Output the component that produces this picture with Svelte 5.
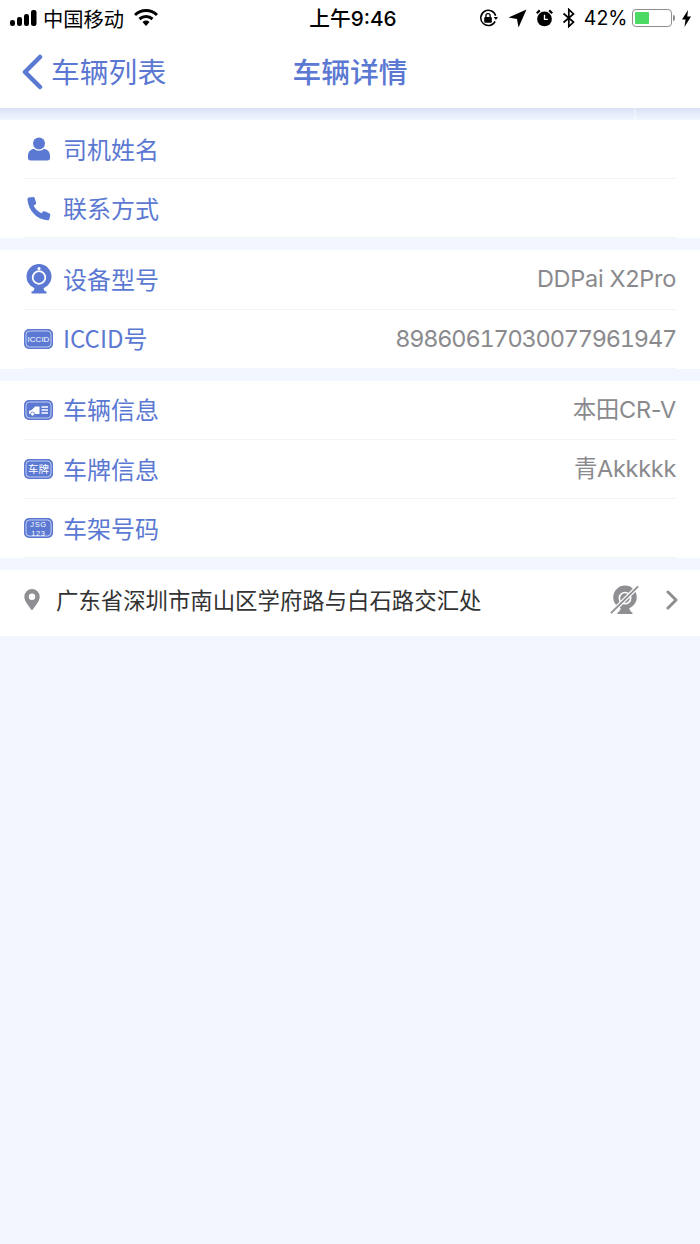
<script>
	const groups = [
		[
			{ icon: 'user', label: '司机姓名', value: '' },
			{ icon: 'phone', label: '联系方式', value: '' }
		],
		[
			{ icon: 'cam', label: '设备型号', value: 'DDPai X2Pro' },
			{ icon: 'iccid', label: 'ICCID号', value: '89860617030077961947', num: true }
		],
		[
			{ icon: 'car', label: '车辆信息', value: '本田CR-V' },
			{ icon: 'plate', label: '车牌信息', value: '青Akkkkk' },
			{ icon: 'jsg', label: '车架号码', value: '' }
		]
	];
</script>

<div class="page">
	<header class="top">
		<div class="status">
			<div class="status-left">
				<svg class="signal" width="28" height="16" viewBox="0 0 28 16">
					<rect x="0" y="10" width="5" height="6" rx="2.2" />
					<rect x="7" y="7" width="5" height="9" rx="2.2" />
					<rect x="14" y="4" width="5" height="12" rx="2.2" />
					<rect x="21" y="0" width="5.5" height="16" rx="2.2" />
				</svg>
				<span class="carrier">中国移动</span>
				<svg class="wifi" width="24" height="18" viewBox="0 0 24 18">
					<path d="M1 6 A16 16 0 0 1 23 6" fill="none" stroke="#000" stroke-width="3" />
					<path d="M5.5 10 A10 10 0 0 1 18.500 10" fill="none" stroke="#000" stroke-width="3" />
					<path d="M8.500 13 A5 5 0 0 1 15.500 13 L12 17 Z" fill="#000" />
				</svg>
			</div>
			<div class="clock">上午9:46</div>
			<div class="status-right">
				<svg width="19" height="19" viewBox="0 0 20 20">
					<path d="M17 13 A8 8 0 1 1 17.500 7" fill="none" stroke="#000" stroke-width="1.600" />
					<path d="M15.500 8.500 L20 8.500 L17.800 11.500 Z" fill="#000" />
					<rect x="5.500" y="8.500" width="8" height="6" rx="1" fill="#000" />
					<path d="M7.300 8.500 V7 A2.200 2.200 0 0 1 11.700 7 V8.500" fill="none" stroke="#000" stroke-width="1.400" />
				</svg>
				<svg class="gap-a" width="19" height="19" viewBox="0 0 18 18">
					<path d="M17.500 0.500 L10 17.500 L8.500 9.500 L0.500 8 Z" fill="#000" />
				</svg>
				<svg class="gap-b" width="17" height="18" viewBox="0 0 18 19">
					<circle cx="9" cy="10.500" r="7.800" fill="#000" />
					<path d="M9 6 V11 H12.500" fill="none" stroke="#fff" stroke-width="1.400" />
					<path d="M0.800 4.500 L4 1.500 M17.200 4.500 L14 1.500" stroke="#000" stroke-width="2.400" />
				</svg>
				<svg class="gap-c" width="14" height="20" viewBox="0 0 14 20">
					<path d="M1.500 5.500 L11.500 14 L6.800 18.500 V1.500 L11.500 6 L1.500 14.500" fill="none" stroke="#000" stroke-width="1.700" />
				</svg>
				<span class="percent">42%</span>
				<div class="battery"><div class="charge"></div></div>
				<div class="nub"></div>
				<svg class="bolt" width="11" height="17" viewBox="0 0 10 17">
					<path d="M6.500 0 L0.500 9.500 H4 L3 17 L9.500 6.500 H5.800 Z" fill="#000" />
				</svg>
			</div>
		</div>
		<nav class="nav">
			<div class="back">
				<svg width="22" height="36" viewBox="0 0 22 36">
					<path d="M19 3 L4 18 L19 33" fill="none" stroke="#5b78d2" stroke-width="4.500" stroke-linecap="round" stroke-linejoin="round" />
				</svg>
				<span class="nav-text">车辆列表</span>
			</div>
			<div class="title nav-text">车辆详情</div>
		</nav>
	</header>
	<div class="shade"></div>

	{#each groups as rows}
		<section class="group">
			{#each rows as row}
				<div class="row">
					<div class="icon">
						{#if row.icon === 'user'}
							<svg width="24" height="26" viewBox="0 0 26 26">
								<circle cx="13" cy="7" r="6.500" />
								<path d="M1 21 C1 15 5 13 8 13 C10 15.500 16 15.500 18 13 C21 13 25 15 25 21 V22.500 C25 24.500 24 25.500 22 25.500 H4 C2 25.500 1 24.500 1 22.500 Z" />
							</svg>
						{:else if row.icon === 'phone'}
							<svg width="25" height="25" viewBox="0 0 26 26">
								<path d="M3 1.500 L7.500 1 C8.300 1 8.800 1.300 9 2 L10.500 7 C10.700 7.800 10.400 8.400 9.800 8.800 L8 10 C9.500 13.500 12.500 16.500 16 18 L17.800 16.200 C18.300 15.700 19 15.600 19.600 15.900 L24.400 18.300 C25.200 18.700 25.500 19.300 25.200 20 L24.300 23.800 C24 24.800 23.200 25.300 22.200 25.200 C11 24.500 2.200 15 1.500 3.500 C1.400 2.400 2 1.700 3 1.500 Z" />
							</svg>
						{:else if row.icon === 'cam'}
							<svg width="26" height="30" viewBox="0 0 26 30">
								<circle cx="13" cy="12.500" r="12.500" />
								<circle cx="13" cy="13.500" r="6.300" fill="none" stroke="#fff" stroke-width="1.800" />
								<circle cx="13" cy="4.500" r="1.600" fill="#fff" />
								<path d="M9 23 H17 L18.500 27 L20.500 27.500 V29.500 H5.500 V27.500 L7.500 27 Z" />
							</svg>
						{:else if row.icon === 'iccid'}
							<svg width="29" height="20" viewBox="0 0 29 20">
								<rect x="0" y="0" width="29" height="20" rx="5" />
								<rect x="2" y="2" width="25" height="16" rx="3.500" fill="none" stroke="#fff" stroke-width="0.800" opacity="0.800" />
								<text x="14.500" y="13" font-size="8" class="tag">ICCID</text>
							</svg>
						{:else if row.icon === 'car'}
							<svg width="29" height="20" viewBox="0 0 29 20">
								<rect x="0" y="0" width="29" height="20" rx="5" />
								<rect x="2" y="2" width="25" height="16" rx="3.500" fill="none" stroke="#fff" stroke-width="0.800" opacity="0.800" />
								<path d="M5 14 V11 L8 9.800 L11 6.500 H15.500 V14 Z" fill="#fff" />
								<circle cx="8.500" cy="14" r="2" fill="#fff" stroke="#5b78d2" stroke-width="0.800" />
								<path d="M17.500 7 H24 M17.500 10 H24 M17.500 13 H24" stroke="#fff" stroke-width="1.500" />
							</svg>
						{:else if row.icon === 'plate'}
							<svg width="29" height="20" viewBox="0 0 29 20">
								<rect x="0" y="0" width="29" height="20" rx="5" />
								<rect x="2" y="2" width="25" height="16" rx="3.500" fill="none" stroke="#fff" stroke-width="0.800" opacity="0.800" />
								<text x="14.500" y="14" font-size="10.500" class="tag">车牌</text>
							</svg>
						{:else}
							<svg width="29" height="20" viewBox="0 0 29 20">
								<rect x="0" y="0" width="29" height="20" rx="5" />
								<rect x="2" y="2" width="25" height="16" rx="3.500" fill="none" stroke="#fff" stroke-width="0.800" opacity="0.800" />
								<text x="14.500" y="9" font-size="7.500" class="tag wide">JSG</text>
								<text x="14.500" y="17.500" font-size="7.500" class="tag wide">123</text>
							</svg>
						{/if}
					</div>
					<span class="label">{row.label}</span>
					{#if row.value}
						<span class="value" class:num={row.num}>{row.value}</span>
					{/if}
				</div>
			{/each}
		</section>
	{/each}

	<section class="address">
		<svg class="pin" width="16" height="22" viewBox="0 0 16 22">
			<path fill-rule="evenodd" d="M8 0 A7.700 7.700 0 0 1 15.700 7.700 C15.700 12 11 17.500 8 21.500 C5 17.500 0.300 12 0.300 7.700 A7.700 7.700 0 0 1 8 0 Z M8 4.500 A3.200 3.200 0 1 0 8 10.900 A3.200 3.200 0 1 0 8 4.500 Z" fill="#8e8e93" />
		</svg>
		<span class="addr-text">广东省深圳市南山区学府路与白石路交汇处</span>
		<svg class="off" width="30" height="32" viewBox="0 0 32 32">
			<circle cx="16" cy="13" r="12.500" fill="#8e8e93" />
			<circle cx="16" cy="14" r="6" fill="none" stroke="#fff" stroke-width="1.800" />
			<path d="M12 24 H20 L22 28 L24 29.500 V31 H8 V29.500 L10 28 Z" fill="#8e8e93" />
			<path d="M2 29 L29 2.500" stroke="#fff" stroke-width="4.500" />
			<path d="M1 30 L30 1.500" stroke="#8e8e93" stroke-width="2" />
		</svg>
		<svg class="chevron" width="12" height="20" viewBox="0 0 12 20">
			<path d="M2 2 L10 10 L2 18" fill="none" stroke="#8e8e93" stroke-width="3" stroke-linecap="round" stroke-linejoin="round" />
		</svg>
	</section>
</div>

<style>
	:global(body) {
		margin: 0;
		background: #f1f6ff;
	}

	.page {
		min-height: 1244px;
		background: #f1f6ff;
		font-family: 'Noto Sans CJK SC', 'Noto Sans', sans-serif;
		font-weight: 400;
	}

	.top {
		background: #fff;
		height: 108px;
	}

	.status {
		display: grid;
		grid-template-columns: 1fr auto 1fr;
		align-items: center;
		height: 36px;
		padding: 0 8px 0 10px;
		color: #000;
	}

	.status-left,
	.status-right {
		display: flex;
		align-items: center;
	}

	.status-right {
		justify-content: flex-end;
	}

	.signal rect {
		fill: #000;
	}

	.carrier {
		font-size: 20.300px;
		margin-left: 5px;
		line-height: 36px;
	}

	.wifi {
		margin-left: 10px;
	}

	.clock {
		font-family: 'Inter', 'Noto Sans CJK SC', sans-serif;
		font-size: 20.700px;
		font-weight: 500;
		margin: -2px 0 0 4px;
	}

	.gap-a {
		margin-left: 10px;
	}

	.gap-b {
		margin-left: 9px;
	}

	.gap-c {
		margin-left: 9px;
	}

	.percent {
		font-family: 'Inter', sans-serif;
		font-size: 19.500px;
		margin-left: 8px;
	}

	.battery {
		box-sizing: border-box;
		width: 40px;
		height: 18px;
		margin-left: 4.500px;
		border: 1.500px solid #8e8e8e;
		border-radius: 4px;
		padding: 2px;
	}

	.charge {
		width: 42%;
		height: 100%;
		background: #4cd964;
		border-radius: 1px;
	}

	.nub {
		width: 2px;
		height: 6px;
		background: #8e8e8e;
		border-radius: 0 2px 2px 0;
		margin-left: 1px;
	}

	.bolt {
		margin-left: 6px;
	}

	.nav {
		display: grid;
		grid-template-columns: 1fr auto 1fr;
		align-items: center;
		height: 72px;
		color: #5b78d2;
		font-size: 28.800px;
	}

	.back {
		display: flex;
		align-items: center;
		padding-left: 21px;
		gap: 8px;
	}

	.title {
		font-weight: 500;
	}

	.nav-text {
		margin-bottom: 4px;
	}

	.shade {
		height: 12px;
		background:
			linear-gradient(90deg, transparent 634px, rgba(255, 255, 255, 0.35) 634px, rgba(255, 255, 255, 0.35) 636px, transparent 636px),
			linear-gradient(#d9e1f5, #f1f6ff);
	}

	.group {
		background: #fff;
		padding: 0 24px;
		margin-bottom: 12px;
	}

	.row {
		box-sizing: border-box;
		display: flex;
		align-items: center;
		height: 59.200px;
		border-bottom: 1px solid #f3f4f7;
		color: #5b78d2;
	}

	.icon {
		display: flex;
		align-items: center;
		justify-content: center;
		width: 29px;
		margin-right: 11px;
	}

	.icon svg {
		fill: #5b78d2;
	}

	.tag {
		fill: #fff;
		text-anchor: middle;
		font-family: 'Liberation Sans', 'Noto Sans CJK SC', sans-serif;
	}

	.wide {
		letter-spacing: 0.6px;
	}

	.label {
		flex: 1;
		font-size: 24px;
		margin: 0 0 2px -1px;
	}

	.value {
		color: #8a8a8e;
		font-family: 'Inter', 'Noto Sans CJK SC', sans-serif;
		font-size: 23.500px;
		line-height: 30px;
		letter-spacing: -0.300px;
	}

	.value.num {
		font-variant-numeric: tabular-nums;
		letter-spacing: -1.200px;
	}

	.address {
		box-sizing: border-box;
		display: flex;
		align-items: center;
		height: 66px;
		background: #fff;
		padding: 0 22px 6px 24px;
	}

	.addr-text {
		flex: 1;
		margin-left: 16px;
		font-size: 22.400px;
		color: #333;
		margin-bottom: 3px;
	}

	.off {
		margin-right: 26px;
	}
</style>
